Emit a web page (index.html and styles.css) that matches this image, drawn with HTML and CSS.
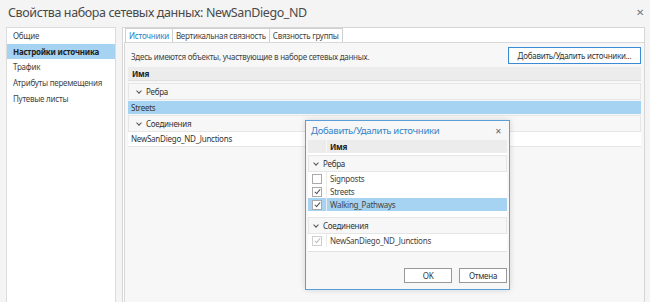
FILE: index.html
```html
<!DOCTYPE html>
<html lang="ru">
<head>
    <meta charset="UTF-8">
    <title>Свойства набора сетевых данных</title>
    <link rel="stylesheet" href="styles.css">
</head>
<body>
    <div class="window">
        <div class="title-bar">
            <h1>Свойства набора сетевых данных: NewSanDiego_ND</h1>
            <span class="close">&#x2715;</span>
        </div>
        <div class="main">
            <!-- левое меню -->
            <ul class="nav">
                <li>Общие</li>
                <li class="active">Настройки источника</li>
                <li>Трафик</li>
                <li>Атрибуты перемещения</li>
                <li>Путевые листы</li>
            </ul>
            <div class="panel">
                <div class="tabs">
                    <div class="tab active">Источники</div>
                    <div class="tab">Вертикальная связность</div>
                    <div class="tab">Связность группы</div>
                </div>
                <div class="tab-body">
                    <div class="desc-row">
                        <span>Здесь имеются объекты, участвующие в наборе сетевых данных.</span>
                        <button class="btn-blue">Добавить/Удалить источники...</button>
                    </div>
                    <div class="table">
                        <div class="th">Имя</div>
                        <div class="group"><span class="chev"></span>Ребра</div>
                        <div class="row selected">Streets</div>
                        <div class="group"><span class="chev"></span>Соединения</div>
                        <div class="row">NewSanDiego_ND_Junctions</div>
                    </div>
                </div>
            </div>
        </div>

        <!-- диалог поверх содержимого -->
        <div class="dialog">
            <div class="dlg-title">
                <span>Добавить/Удалить источники</span>
                <span class="dlg-close">&#x2715;</span>
            </div>
            <div class="dlg-list">
                <div class="dlg-head"><span class="cell-check"></span><span class="cell-name">Имя</span></div>
                <div class="group"><span class="chev"></span>Ребра</div>
                <div class="item"><span class="cell-check"><span class="box"></span></span><span class="cell-name">Signposts</span></div>
                <div class="item"><span class="cell-check"><span class="box checked"></span></span><span class="cell-name">Streets</span></div>
                <div class="item selected"><span class="cell-check"><span class="box checked"></span></span><span class="cell-name">Walking_Pathways</span></div>
                <div class="spacer"></div>
                <div class="group"><span class="chev"></span>Соединения</div>
                <div class="item"><span class="cell-check"><span class="box checked disabled"></span></span><span class="cell-name">NewSanDiego_ND_Junctions</span></div>
            </div>
            <div class="dlg-buttons">
                <button class="btn">OK</button>
                <button class="btn">Отмена</button>
            </div>
        </div>
    </div>
</body>
</html>
```

FILE: styles.css
```css
body {
    margin: 0;
    font-family: "Noto Sans", "Open Sans", sans-serif;
    font-size: 8px;
    letter-spacing: -0.25px;
    color: #333;
    background-color: #f4f4f4;
}

.window {
    position: relative;
    width: 650px;
    height: 302px;
    overflow: hidden;
}

.title-bar {
    display: flex;
    justify-content: space-between;
    align-items: center;
    height: 27px;
    padding: 0 6px 3px 8px;
    box-sizing: border-box;
}

.title-bar h1 {
    margin: 0;
    font-size: 12.5px;
    letter-spacing: -0.4px;
    font-weight: normal;
    color: #4a4a4a;
}

.close {
    font-size: 10px;
    color: #777;
}

.main {
    display: flex;
    gap: 6px;
    padding: 0 5px 0 6px;
    height: 275px;
}

/* левое меню */
.nav {
    list-style: none;
    margin: 0;
    padding: 0;
    width: 110px;
    background-color: #fff;
    border: 1px solid #dcdcdc;
    border-bottom: none;
    box-sizing: border-box;
}

.nav li {
    height: 15.7px;
    line-height: 15.7px;
    padding-left: 6px;
    color: #444;
}

.nav li.active {
    background-color: #a6d3f2;
    font-weight: bold;
    color: #222;
}

.panel {
    flex: 1;
    display: flex;
    flex-direction: column;
    border: 1px solid #d6d6d6;
    border-bottom: none;
    background-color: #fff;
    padding-left: 1px;
}

.tabs {
    display: flex;
    height: 14px;
    padding-left: 1px;
}

.tab {
    height: 13px;
    line-height: 13px;
    padding: 0 3px;
    border: 1px solid #d0d0d0;
    border-bottom: none;
    border-left: none;
    color: #444;
    background-color: #fff;
}

.tab.active {
    color: #2a7fc8;
    border-left: 1px solid #d0d0d0;
}

.tab-body {
    flex: 1;
    background-color: #f7f7f7;
    border-top: 1px solid #d8d8d8;
    border-left: 1px solid #d8d8d8;
    padding: 3px 3px 0 3px;
}

.desc-row {
    display: flex;
    justify-content: space-between;
    align-items: flex-end;
    height: 18px;
    padding-left: 3px;
    color: #444;
}

.desc-row span {
    padding-bottom: 2px;
}

.btn-blue {
    font-family: inherit;
    font-size: 8px;
    letter-spacing: inherit;
    color: #333;
    background-color: #fff;
    border: 1px solid #3a8ad6;
    height: 17px;
    width: 133px;
    padding: 0;
}

.table {
    margin-top: 3px;
}

.th {
    height: 13px;
    line-height: 13px;
    background-color: #ececec;
    border-bottom: 1px solid #e0e0e0;
    padding-left: 4px;
    font-weight: bold;
    color: #222;
}

.group {
    height: 15px;
    line-height: 15px;
    margin-top: 2px;
    border: 1px solid #e6e6e6;
    background-color: #f7f7f7;
    padding-left: 8px;
    color: #333;
}

.chev {
    display: inline-block;
    width: 3px;
    height: 3px;
    border-right: 1px solid #555;
    border-bottom: 1px solid #555;
    transform: rotate(45deg);
    margin: 0 5px 2px 0;
}

.row {
    height: 14px;
    line-height: 14px;
    padding-left: 3px;
    background-color: #fff;
    border-bottom: 1px solid #e6e6e6;
}

.row.selected {
    background-color: #a6d3f2;
    height: 13px;
    line-height: 13px;
    margin: 1px 0 -1px 0;
    border-bottom: none;
}

/* диалог */
.dialog {
    position: absolute;
    left: 305px;
    top: 120px;
    width: 205px;
    height: 170px;
    box-sizing: border-box;
    border: 1px solid #5a9fd8;
    background-color: #f7f7f7;
    box-shadow: 0 0 6px rgba(0, 0, 0, 0.15);
    display: flex;
    flex-direction: column;
}

.dlg-title {
    display: flex;
    justify-content: space-between;
    align-items: center;
    height: 18px;
    padding: 0 7px 0 5px;
    font-size: 9.5px;
    letter-spacing: -0.3px;
    color: #3584c8;
}

.dlg-close {
    font-size: 8px;
    color: #666;
}

.dlg-list {
    margin: 1px 2px 0 2px;
    height: 111px;
    background-color: #fff;
    border-bottom: 1px solid #e0e0e0;
}

.dlg-head {
    display: flex;
    height: 13px;
    line-height: 13px;
    background-color: #ececec;
    font-weight: bold;
    color: #222;
}

.dlg-head .cell-check {
    border-right: 1px solid #f7f7f7;
}

.dlg-list .group {
    padding-left: 5px;
    margin-top: 2px;
}

.cell-check {
    display: flex;
    align-items: center;
    justify-content: center;
    width: 18px;
    flex: none;
    border-right: 1px solid #ececec;
}

.cell-name {
    padding-left: 3px;
}

.item {
    display: flex;
    height: 13px;
    line-height: 13px;
    color: #444;
}

.item.selected {
    background-color: #a6d3f2;
}

.box {
    position: relative;
    width: 8px;
    height: 8px;
    border: 1px solid #aaa;
    background-color: #fff;
}

.box.checked::after {
    content: "";
    position: absolute;
    left: 2.5px;
    top: 0;
    width: 2px;
    height: 5px;
    border-right: 1px solid #555;
    border-bottom: 1px solid #555;
    transform: rotate(40deg);
}

.box.disabled {
    border-color: #cfcfcf;
}

.box.disabled::after {
    border-color: #bbb;
}

.spacer {
    height: 4px;
}

.dlg-buttons {
    display: flex;
    justify-content: flex-end;
    gap: 7px;
    padding: 16px 2px 0 0;
}

.btn {
    font-family: inherit;
    font-size: 8px;
    letter-spacing: inherit;
    color: #333;
    background-color: #fff;
    border: 1px solid #999;
    width: 48px;
    height: 15px;
    padding: 0;
}
```
